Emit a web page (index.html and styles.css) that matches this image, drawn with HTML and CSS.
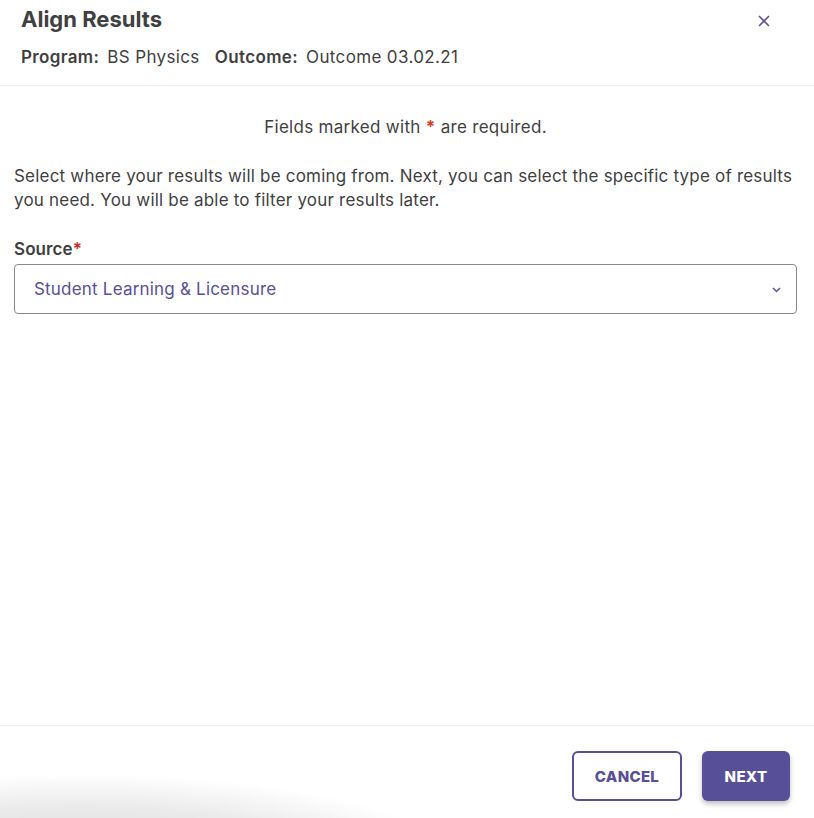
FILE: index.html
```html
<!DOCTYPE html>
<html lang="en">
<head>
    <meta charset="UTF-8">
    <meta name="viewport" content="width=device-width, initial-scale=1.0">
    <title>Align Results</title>
    <link rel="stylesheet" href="styles.css">
</head>
<body>
    <div class="modal">
        <div class="modal-header">
            <div class="header-text">
                <h1>Align Results</h1>
                <div class="meta">
                    <span class="meta-label">Program:</span>
                    <span class="meta-value">BS Physics</span>
                    <span class="meta-label">Outcome:</span>
                    <span class="meta-value">Outcome 03.02.21</span>
                </div>
            </div>
            <button class="close-button" aria-label="Close">
                <svg width="12" height="12" viewBox="0 0 12 12">
                    <path d="M1 1 L11 11 M11 1 L1 11" stroke="#5a5398" stroke-width="1.6" fill="none"/>
                </svg>
            </button>
        </div>

        <div class="modal-body">
            <p class="required-note">Fields marked with <span class="req">*</span> are required.</p>
            <p class="intro">Select where your results will be coming from. Next, you can select the specific type of results you need. You will be able to filter your results later.</p>

            <label class="field-label" for="source">Source<span class="req-label">*</span></label>
            <div class="select-box" id="source">
                <span class="select-value">Student Learning &amp; Licensure</span>
                <svg class="chevron" width="9" height="6" viewBox="0 0 9 6">
                    <path d="M1 1 L4.5 4.5 L8 1" stroke="#5a5398" stroke-width="1.5" fill="none"/>
                </svg>
            </div>
        </div>

        <div class="modal-footer">
            <button class="btn btn-outline">CANCEL</button>
            <button class="btn btn-primary">NEXT</button>
        </div>
        <div class="bottom-shade"></div>
    </div>
</body>
</html>
```

FILE: styles.css
```css
body {
    font-family: Inter, "Noto Sans", Arial, sans-serif;
    margin: 0;
    padding: 0;
    background: #ffffff;
    color: #3f3f3f;
}
.modal {
    height: 818px;
    display: flex;
    flex-direction: column;
    position: relative;
    overflow: hidden;
}
.modal-header {
    display: flex;
    justify-content: space-between;
    align-items: flex-start;
    padding: 5px 44px 0 21px;
    height: 80px;
    border-bottom: 1px solid #efefef;
}
h1 {
    font-size: 22px;
    font-weight: 700;
    margin: 0;
    line-height: 28px;
    color: #404040;
}
.meta {
    margin-top: 12px;
    font-size: 17px;
    line-height: 24px;
    letter-spacing: 0.35px;
}
.meta-label {
    font-weight: 600;
    margin-right: 3px;
}
.meta-value {
    margin-right: 10px;
}
.close-button {
    background: none;
    border: none;
    padding: 0;
    margin-top: 10px;
    cursor: pointer;
}
.modal-body {
    flex: 1;
    padding: 0 17px 0 14px;
    font-size: 17px;
    line-height: 24px;
    letter-spacing: 0.3px;
}
.required-note {
    text-align: center;
    margin: 29px 0 25px;
}
.req {
    color: #d1401f;
    font-weight: 700;
}
.intro {
    margin: 0 0 25px;
    letter-spacing: 0.2px;
}
.field-label {
    display: block;
    font-weight: 600;
    margin-bottom: 3px;
    letter-spacing: 0.1px;
}
.req-label {
    color: #c62a2a;
}
.select-box {
    display: flex;
    justify-content: space-between;
    align-items: center;
    height: 48px;
    border: 1px solid #8a8a8a;
    border-radius: 4px;
    padding: 0 15px 0 19px;
    color: #574f98;
    letter-spacing: 0.2px;
}
.chevron {
    margin-top: 1px;
}
.modal-footer {
    display: flex;
    justify-content: flex-end;
    gap: 20px;
    padding: 25px 24px 17px;
    border-top: 1px solid #efefef;
}
.btn {
    height: 50px;
    font-family: Inter, "Noto Sans", Arial, sans-serif;
    font-size: 15px;
    font-weight: 800;
    letter-spacing: 0.3px;
    border-radius: 6px;
    cursor: pointer;
}
.btn-outline {
    width: 110px;
    background: #ffffff;
    color: #574f98;
    border: 2px solid #574f98;
}
.btn-primary {
    width: 88px;
    background: #574f98;
    color: #ffffff;
    border: none;
    box-shadow: 0 3px 5px rgba(0, 0, 0, 0.25);
}
.bottom-shade {
    position: absolute;
    left: -300px;
    bottom: -45px;
    width: 760px;
    height: 90px;
    background: radial-gradient(ellipse at 50% 100%, rgba(0, 0, 0, 0.16) 0%, rgba(0, 0, 0, 0.08) 45%, rgba(0, 0, 0, 0) 70%);
    pointer-events: none;
}
```
